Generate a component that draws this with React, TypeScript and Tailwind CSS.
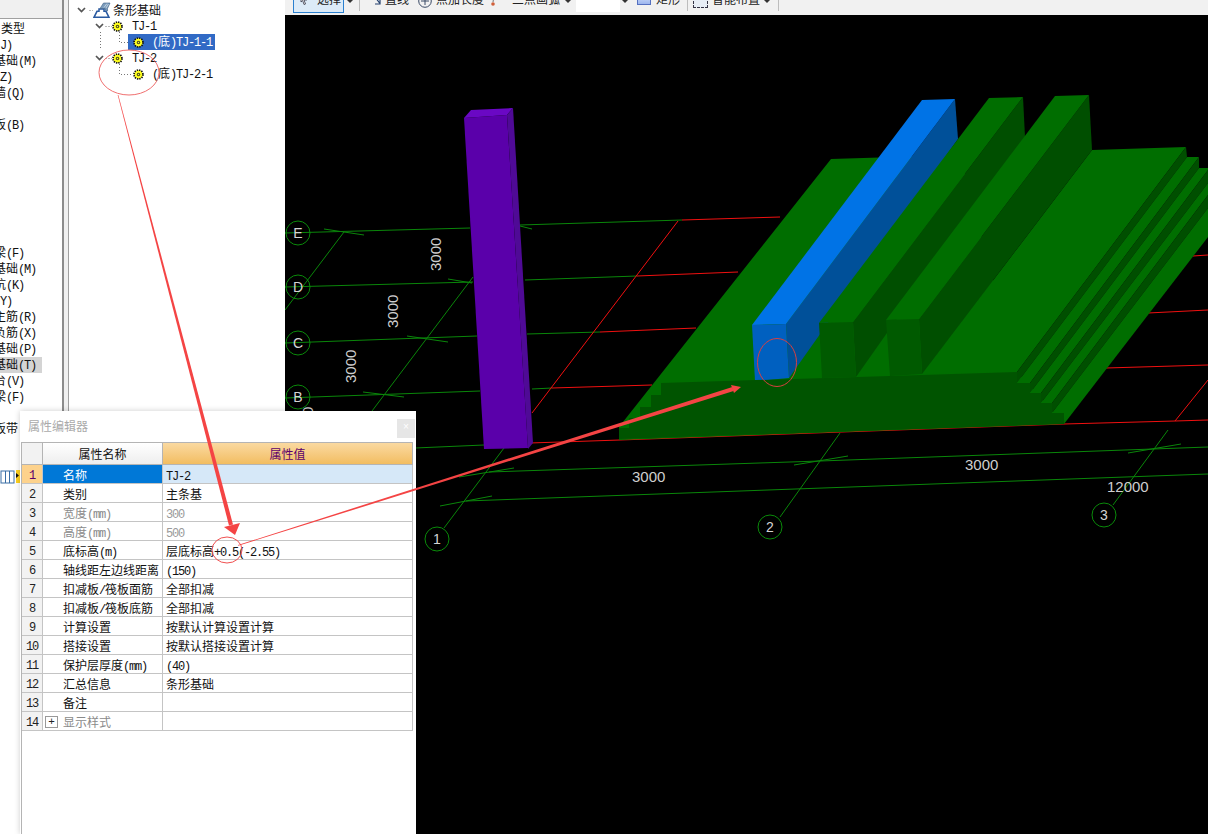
const sideItems = [
  { top: 21, left: 1, text: "类型" },
  { top: 37, text: "(J)" },
  { top: 53, text: "基础(M)" },
  { top: 69, text: "(Z)" },
  { top: 85, text: "墙(Q)" },
  { top: 117, text: "板(B)" },
  { top: 245, text: "梁(F)" },
  { top: 261, text: "基础(M)" },
  { top: 277, text: "坑(K)" },
  { top: 293, text: "(Y)" },
  { top: 309, text: "主筋(R)" },
  { top: 325, text: "负筋(X)" },
  { top: 341, text: "基础(P)" },
  { top: 357, text: "基础(T)", active: true },
  { top: 373, text: "台(V)" },
  { top: 389, text: "梁(F)" },
  { top: 421, text: "板带" },
];

const rows = [
  { name: "名称", value: "TJ-2", selected: true },
  { name: "类别", value: "主条基" },
  { name: "宽度(mm)", value: "300", muted: true },
  { name: "高度(mm)", value: "500", muted: true },
  { name: "底标高(m)", value: "层底标高+0.5(-2.55)" },
  { name: "轴线距左边线距离", value: "(150)" },
  { name: "扣减板/筏板面筋", value: "全部扣减" },
  { name: "扣减板/筏板底筋", value: "全部扣减" },
  { name: "计算设置", value: "按默认计算设置计算" },
  { name: "搭接设置", value: "按默认搭接设置计算" },
  { name: "保护层厚度(mm)", value: "(40)" },
  { name: "汇总信息", value: "条形基础" },
  { name: "备注", value: "" },
  { name: "显示样式", value: "", expand: true, mutedName: true },
];

const fontStack = "font-['Liberation_Mono','Noto_Sans_CJK_SC',monospace]";

// latin runs are half the width of a CJK glyph in the original
function Mixed({ text }: { text: string }) {
  const parts = text.match(/[\x00-\x7f]+|[^\x00-\x7f]+/g) ?? [];
  return (
    <>
      {parts.map((part, i) =>
        /^[\x00-\x7f]/.test(part) ? (
          <span key={i} className="tracking-[-1.2px]">{part}</span>
        ) : (
          <span key={i}>{part}</span>
        )
      )}
    </>
  );
}

function Gear({ className }: { className?: string }) {
  return (
    <svg viewBox="0 0 10 10" className={className}>
      <circle cx="5" cy="5" r="4" fill="#ffff20" stroke="#111" strokeWidth="1.7" strokeDasharray="1.2 0.9" />
      <circle cx="5" cy="5" r="3.100" fill="#ffff20" />
      <circle cx="5" cy="5" r="1.600" fill="#4a4a20" />
      <circle cx="5" cy="5" r="0.600" fill="#ffff20" />
    </svg>
  );
}

function Chevron({ className }: { className?: string }) {
  return (
    <svg viewBox="0 0 9 6" className={className}>
      <path d="M1 1l3.5 3.5L8 1" fill="none" stroke="#555" strokeWidth="1.7" />
    </svg>
  );
}

function Caret({ className }: { className?: string }) {
  return (
    <svg viewBox="0 0 6 3" className={`h-[3px] w-[6px] shrink-0 ${className ?? ""}`}>
      <path d="M0 0h6L3 3z" fill="#333" />
    </svg>
  );
}

function Toolbar() {
  return (
    <div className={`h-[15px] shrink-0 overflow-hidden bg-[#f1f1f1] text-xs text-[#222] ${fontStack}`}>
      <div className="-mt-[12px] flex h-[26px] items-center pl-2">
        {/* select */}
        <div className="flex h-6 w-[51px] shrink-0 items-center border border-[#2a80d0] bg-[#dcebf8] pl-[6px]">
          <svg viewBox="0 0 8 12" className="-mt-1 h-3 w-2 shrink-0">
            <path d="M1 1l6 6H4l1.5 4L4 11.500 2.700 7.500 1 9z" fill="#fff" stroke="#334" strokeWidth="0.8" />
          </svg>
          <span className="ml-[9px] whitespace-nowrap">选择</span>
        </div>
        <Caret className="ml-[3px]" />
        <div className="ml-[6px] h-5 w-px shrink-0 bg-[#bdbdbd]" />
        {/* line */}
        <svg viewBox="0 0 9 12" className="-mt-1 ml-[12px] h-3 w-[9px] shrink-0">
          <path d="M1 1l6.500 9M8 5v6H3" fill="none" stroke="#24406e" strokeWidth="1.200" />
        </svg>
        <span className="ml-1 whitespace-nowrap">直线</span>
        <svg viewBox="0 0 14 14" className="ml-[9px] h-[14px] w-[14px] shrink-0">
          <circle cx="7" cy="7" r="6.300" fill="none" stroke="#3a4a66" strokeWidth="1" />
          <path d="M7 3v8M3 7h8" stroke="#3a4a66" strokeWidth="1" />
        </svg>
        <span className="ml-1 whitespace-nowrap">点加长度</span>
        <svg viewBox="0 0 5 14" className="-mt-[2px] ml-[7px] h-[14px] w-[5px] shrink-0">
          <path d="M3.500 0L2 9" stroke="#777" strokeWidth="1" />
          <circle cx="2" cy="11" r="1.800" fill="#d0603a" />
        </svg>
        <span className="ml-4 whitespace-nowrap">三点画弧</span>
        <Caret className="ml-[5px]" />
        <div className="-mt-[2px] ml-[5px] h-6 w-[44px] shrink-0 bg-white" />
        <Caret className="ml-[2px]" />
        <div className="-mt-1 ml-[9px] h-3 w-[14px] shrink-0 border border-[#5570c0] bg-gradient-to-b from-[#dbe5fb] to-[#9db6ee]" />
        <span className="ml-[5px] whitespace-nowrap">矩形</span>
        <div className="ml-[7px] h-5 w-px shrink-0 bg-[#bdbdbd]" />
        <div className="-mt-[2px] ml-[5px] flex h-[15px] w-[15px] shrink-0 items-center justify-center border border-dashed border-[#334] bg-[#e8eef6]" />
        <span className="ml-1 whitespace-nowrap">智能布置</span>
        <Caret className="ml-1" />
        <div className="ml-2 h-5 w-px shrink-0 bg-[#bdbdbd]" />
      </div>
    </div>
  );
}

function Scene() {
  const greenLines = [
    "M285 233L470 228",
    "M520 225L682 220",
    "M285 287L473 282",
    "M525 280L637 276",
    "M285 343L477 336",
    "M527 334L600 332",
    "M285 398L480 391",
    "M532 389L552 388",
    "M415 448L484 445",
    "M285 310L344 232",
    "M372 411L473 277",
    "M444 528L504 448",
    "M780 517L840 433",
    "M1113 505L1168 430",
    "M489 472L820 461L1153 449L1208 447",
    "M466 501L1208 474",
    // ticks on the grid crossings
    "M324 229L364 235",
    "M520 226L532 229",
    "M448 279L472 283",
    "M407 336L448 342",
    "M363 392L404 397",
    "M459 477L514 468",
    "M794 465L848 456",
    "M1128 453L1181 444",
    "M440 506L492 496",
  ];
  const redLines = [
    "M682 220L780 217",
    "M637 276L738 272",
    "M600 332L696 328",
    "M552 388L652 385",
    "M530 443L620 440L1064 424L1175 421L1208 420",
    "M1106 368L1208 365",
    "M1148 313L1208 310",
    "M1193 256L1208 255",
    "M532 413L678 221",
    "M1175 421L1208 380",
  ];
  const bubbles = [
    { cx: 298, cy: 233, t: "E" },
    { cx: 298, cy: 287, t: "D" },
    { cx: 298, cy: 343, t: "C" },
    { cx: 298, cy: 397, t: "B" },
    { cx: 437, cy: 539, t: "1" },
    { cx: 770, cy: 527, t: "2" },
    { cx: 1104, cy: 515, t: "3" },
  ];
  return (
    <svg viewBox="285 15 923 819" className="block h-full w-full">
      {greenLines.map((d) => (
        <path key={d} d={d} fill="none" stroke="#0a860a" strokeWidth="1" />
      ))}
      {redLines.map((d) => (
        <path key={d} d={d} fill="none" stroke="#f01010" strokeWidth="1" />
      ))}
      {bubbles.map((b) => (
        <g key={b.t}>
          <circle cx={b.cx} cy={b.cy} r="12" fill="none" stroke="#0a8a0a" strokeWidth="1" />
          <text x={b.cx} y={b.cy + 5} textAnchor="middle" fontSize="14" fill="#d4d4d4" fontFamily="Liberation Sans">{b.t}</text>
        </g>
      ))}
      <g fill="#cfcfcf" fontSize="15" fontFamily="Liberation Sans">
        <text transform="translate(441 271) rotate(-90)">3000</text>
        <text transform="translate(398 328) rotate(-90)">3000</text>
        <text transform="translate(356 383) rotate(-90)">3000</text>
        <text transform="translate(313 440) rotate(-90)">3000</text>
        <text x="632" y="482">3000</text>
        <text x="965" y="470">3000</text>
        <text x="1107" y="492">12000</text>
      </g>

      {/* purple column */}
      <polygon points="464,118 507,115 528,448 484,449" fill="#5a00aa" />
      <polygon points="464,118 471,110 513,108 507,115" fill="#6a08c4" />
      <polygon points="507,115 513,108 533,443 528,449" fill="#4f0a96" />

      {/* slab */}
      <polygon points="619,427 831,159 960,155 1017,372 1064,424 619,440" fill="#006e00" />
      <polygon points="922,374 1092,150 1186,147 1017,372" fill="#006e00" />
      <polygon points="1017,372 1186,147 1187,157 1017,383" fill="#004f00" />
      <polygon points="1017,383 1187,157 1199,157 1030,383" fill="#006e00" />
      <polygon points="1030,383 1199,157 1199,168 1030,393" fill="#004f00" />
      <polygon points="1030,393 1199,168 1208,168 1208,170 1041,393" fill="#006e00" />
      <polygon points="1041,393 1208,170 1208,183 1041,403" fill="#004f00" />
      <polygon points="1041,403 1208,183 1208,195 1052,403" fill="#006e00" />
      <polygon points="1052,403 1208,195 1208,208 1052,413" fill="#004f00" />
      <polygon points="1052,413 1208,208 1208,237 1064,424" fill="#006e00" />

      {/* blue beam */}
      <polygon points="786,324 955,99 958,139 789,378" fill="#005099" />
      <polygon points="752,325 922,100 955,99 786,324" fill="#0073e6" />
      <polygon points="752,325 786,324 789,378 755,381" fill="#0060c0" />

      {/* second rib */}
      <polygon points="853,322 1023,97 1025,137 856,377" fill="#004f00" />
      <polygon points="819,323 989,98 1023,97 853,322" fill="#006e00" />
      <polygon points="819,323 853,322 856,377 822,378" fill="#005a00" />

      {/* third rib */}
      <polygon points="919,319 1089,95 1092,150 922,374" fill="#004f00" />
      <polygon points="886,320 1055,96 1089,95 919,319" fill="#006e00" />
      <polygon points="886,320 919,319 922,374 890,376" fill="#005a00" />

      {/* stepped front of the slab */}
      <polygon
        points="619,439 1064,424 1064,413 1052,413 1052,403 1041,403 1041,393 1030,393 1030,383 1017,383 1017,372 661,383 661,395 651,395 651,407 640,407 640,418 629,418 629,428 619,428"
        fill="#005400"
      />
    </svg>
  );
}

function Annotations() {
  return (
    <svg viewBox="0 0 1208 834" className="pointer-events-none absolute inset-0 h-full w-full">
      <ellipse cx="129" cy="72.500" rx="30" ry="22.500" fill="none" stroke="#f07070" strokeWidth="1" />
      <ellipse cx="227" cy="550" rx="15" ry="13" fill="none" stroke="#f05050" strokeWidth="1" />
      <ellipse cx="777" cy="362.500" rx="19.500" ry="24" fill="none" stroke="#d84040" strokeWidth="1" />
      <polygon points="117.700,95 118.300,95 233,524.500 229,525.500" fill="#f44444" />
      <polygon points="235,535 224,527 240,523" fill="#f44444" />
      <polygon points="238,545 238.200,545.800 733.600,391 732.400,387" fill="#f44444" />
      <polygon points="741,387 731,385 734,393" fill="#f44444" />
    </svg>
  );
}

function PropertyDialog() {
  return (
    <div className={`absolute bottom-0 left-5 top-[411px] flex w-[396px] flex-col bg-white shadow-[0_0_6px_rgba(0,0,0,0.2)] ${fontStack}`}>
      <div className="flex h-[31px] shrink-0 items-center justify-between pl-2 pr-px pt-[3px]">
        <span className="text-xs text-[#aaaaaa]">属性编辑器</span>
        <div className="flex h-[19px] w-[18px] items-center justify-center bg-[#e6e6e6] text-[10px] leading-none text-white">×</div>
      </div>
      <div className="ml-px w-[392px] flex-1 border-l border-t border-[#b4b4b4] text-xs">
        <div className="flex h-[22px] border-b border-[#b4b4b4]">
          <div className="w-[21px] shrink-0 border-r border-[#b4b4b4] bg-[#f2f2f2]" />
          <div className="flex w-[120px] shrink-0 items-center justify-center border-r border-[#b4b4b4] bg-gradient-to-b from-white to-[#eeeeee] pt-1 text-[#111]">
            属性名称
          </div>
          <div className="flex flex-1 items-center justify-center border-r border-[#b4b4b4] bg-gradient-to-b from-[#fad9a0] to-[#f2bd60] pt-1 text-[#5c006c]">
            属性值
          </div>
        </div>
        {rows.map((row, i) => (
          <div key={row.name} className="flex h-[19px] border-b border-[#c4c4c4]">
            <div className={row.selected
              ? "flex w-[21px] shrink-0 items-center justify-center border-r border-[#c4c4c4] bg-[#fdd28c] pt-[3px] text-[#5c006c]"
              : "flex w-[21px] shrink-0 items-center justify-center border-r border-[#c4c4c4] bg-[#f2f2f2] pt-[3px] text-[#222]"}>
              <Mixed text={String(i + 1)} />
            </div>
            <div className={row.selected
              ? "flex w-[120px] shrink-0 items-center border-r border-[#c4c4c4] bg-[#0078d7] pl-5 pt-[6px] text-white"
              : row.muted || row.mutedName
                ? "flex w-[120px] shrink-0 items-center border-r border-[#c4c4c4] pl-5 pt-[6px] text-[#8a8a8a]"
                : "flex w-[120px] shrink-0 items-center border-r border-[#c4c4c4] pl-5 pt-[6px] text-[#111]"}>
              {row.expand && (
                <span className="-mb-[2px] -mt-[6px] -ml-[18px] mr-[5px] flex h-3 w-[13px] shrink-0 items-center justify-center border border-[#999] text-[11px] leading-none text-[#222]">+</span>
              )}
              <span className="whitespace-nowrap"><Mixed text={row.name} /></span>
            </div>
            <div className={row.selected
              ? "flex flex-1 items-center whitespace-pre border-r border-[#c4c4c4] bg-[#d6e8f8] pl-[3px] pt-[5px] text-[#111]"
              : row.muted
                ? "flex flex-1 items-center whitespace-pre border-r border-[#c4c4c4] pl-[3px] pt-[5px] text-[#9a9a9a]"
                : "flex flex-1 items-center whitespace-pre border-r border-[#c4c4c4] pl-[3px] pt-[5px] text-[#111]"}>
              <Mixed text={row.value} />
            </div>
          </div>
        ))}
      </div>
    </div>
  );
}

export default function App() {
  return (
    <div className={`relative flex h-[834px] w-[1208px] overflow-hidden bg-white ${fontStack}`}>
      {/* left nav, its labels run off the window edge */}
      <div className="relative w-[64px] shrink-0 overflow-hidden border-r-2 border-[#8c8c8c] text-xs">
        <div className="h-[19px] border-b border-[#a0a0a0] bg-[#f0f0f0]" />
        {sideItems.map((item) =>
          <div key={item.top}>
            {item.active && <div style={{ top: item.top }} className="absolute left-0 h-4 w-[42px] bg-[#d4d4d4]" />}
            <div
              style={{ top: item.top + 1, left: item.left ?? -6 }}
              className="absolute flex h-4 items-center whitespace-nowrap text-[#111]"
            >
              <Mixed text={item.text} />
            </div>
          </div>
        )}
        <svg viewBox="0 0 20 14" className="absolute left-0 top-[470px] h-[14px] w-5">
          <rect x="1" y="1" width="13" height="12" fill="#fff" stroke="#3a6ea5" />
          <path d="M5.500 1v12M9.500 1v12" stroke="#3a6ea5" strokeWidth="1" />
          <rect x="16" y="0" width="4" height="13" fill="#ffd21f" />
          <path d="M16 3l3 2.500-3 2.500z" fill="#111" />
        </svg>
      </div>
      <div className="w-[5px] shrink-0 border-r border-[#a0a0a0] bg-[#f0f0f0]" />

      {/* tree */}
      <div className="relative w-[216px] shrink-0 pt-[2px] text-xs text-[#111]">
        <svg viewBox="69 0 216 90" className="absolute left-0 top-0 h-[90px] w-[216px]">
          <path
            d="M89.500 10.500H93M105.500 26.500H112M105.500 58.500H112M100.500 32V48M119.500 32V42.500H128M119.500 64V74.500H132"
            fill="none"
            stroke="#777"
            strokeWidth="1"
            strokeDasharray="1 2"
          />
        </svg>
        <div className="flex h-4 items-center pl-2">
          <Chevron className="h-[6px] w-[9px] shrink-0" />
          <svg viewBox="0 0 18 16" className="ml-[7px] h-4 w-[18px] shrink-0">
            <path d="M1 15.300h15l-3-6h-2V7H6v2.300H4z" fill="#fff" stroke="#2a5aa0" strokeWidth="1.500" />
            <path d="M7 6.500L10.500 1H17l-2.500 5.500V9L12 8V6.500z" fill="#7d9dbc" stroke="#3c5f86" strokeWidth="0.600" />
            <path d="M11 5.500l3-4M13 6l2.500-4" stroke="#d8e4ee" strokeWidth="0.700" />
          </svg>
          <span className="ml-[2px] translate-y-[2px] whitespace-nowrap">条形基础</span>
        </div>
        <div className="flex h-4 items-center pl-[26px]">
          <Chevron className="h-[6px] w-[9px] shrink-0" />
          <Gear className="ml-[8px] h-[11px] w-[11px] shrink-0" />
          <span className="ml-[9px] translate-y-px whitespace-nowrap"><Mixed text="TJ-1" /></span>
        </div>
        <div className="flex h-4 items-center pl-[59px]">
          <div className="flex h-4 w-[87px] items-center bg-[#316ac5] pl-[5px] text-white">
            <Gear className="h-[11px] w-[11px] shrink-0" />
            <span className="ml-2 translate-y-px whitespace-nowrap"><Mixed text="(底)TJ-1-1" /></span>
          </div>
        </div>
        <div className="flex h-4 items-center pl-[26px]">
          <Chevron className="h-[6px] w-[9px] shrink-0" />
          <Gear className="ml-[8px] h-[11px] w-[11px] shrink-0" />
          <span className="ml-[9px] translate-y-px whitespace-nowrap"><Mixed text="TJ-2" /></span>
        </div>
        <div className="flex h-4 items-center pl-[64px]">
          <Gear className="h-[11px] w-[11px] shrink-0" />
          <span className="ml-2 translate-y-px whitespace-nowrap"><Mixed text="(底)TJ-2-1" /></span>
        </div>
      </div>

      {/* main */}
      <div className="flex min-w-0 flex-1 flex-col">
        <Toolbar />
        <div className="min-h-0 flex-1 bg-black"><Scene /></div>
      </div>

      <PropertyDialog />
      <Annotations />
    </div>
  );
}
